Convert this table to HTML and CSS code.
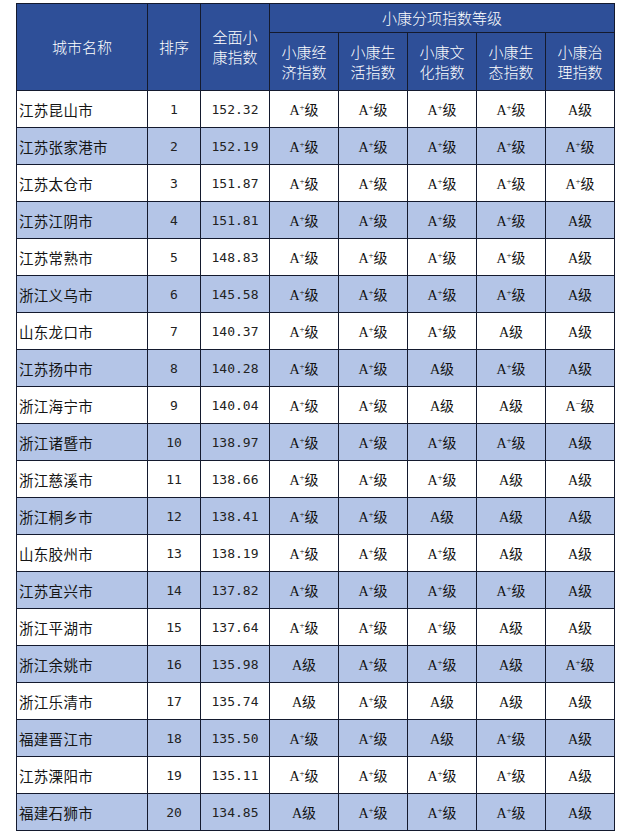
FILE: index.html
```html
<!DOCTYPE html>
<html lang="zh-CN">
<head>
<meta charset="utf-8">
<title>小康指数</title>
<link rel="stylesheet" href="styles.css">
</head>
<body>
<table class="rank">
  <colgroup>
    <col class="c-city"><col class="c-rank"><col class="c-score">
    <col class="c-g"><col class="c-g"><col class="c-g"><col class="c-g"><col class="c-g">
  </colgroup>
  <thead>
    <tr class="h1">
      <th rowspan="2">城市名称</th>
      <th rowspan="2">排序</th>
      <th rowspan="2">全面小<br>康指数</th>
      <th colspan="5">小康分项指数等级</th>
    </tr>
    <tr class="h2">
      <th>小康经<br>济指数</th>
      <th>小康生<br>活指数</th>
      <th>小康文<br>化指数</th>
      <th>小康生<br>态指数</th>
      <th>小康治<br>理指数</th>
    </tr>
  </thead>
  <tbody>
    <tr><td class="city">江苏昆山市</td><td class="num">1</td><td class="num">152.32</td><td class="g">A<sup>+</sup>级</td><td class="g">A<sup>+</sup>级</td><td class="g">A<sup>+</sup>级</td><td class="g">A<sup>+</sup>级</td><td class="g">A级</td></tr>
    <tr><td class="city">江苏张家港市</td><td class="num">2</td><td class="num">152.19</td><td class="g">A<sup>+</sup>级</td><td class="g">A<sup>+</sup>级</td><td class="g">A<sup>+</sup>级</td><td class="g">A<sup>+</sup>级</td><td class="g">A<sup>+</sup>级</td></tr>
    <tr><td class="city">江苏太仓市</td><td class="num">3</td><td class="num">151.87</td><td class="g">A<sup>+</sup>级</td><td class="g">A<sup>+</sup>级</td><td class="g">A<sup>+</sup>级</td><td class="g">A<sup>+</sup>级</td><td class="g">A<sup>+</sup>级</td></tr>
    <tr><td class="city">江苏江阴市</td><td class="num">4</td><td class="num">151.81</td><td class="g">A<sup>+</sup>级</td><td class="g">A<sup>+</sup>级</td><td class="g">A<sup>+</sup>级</td><td class="g">A<sup>+</sup>级</td><td class="g">A级</td></tr>
    <tr><td class="city">江苏常熟市</td><td class="num">5</td><td class="num">148.83</td><td class="g">A<sup>+</sup>级</td><td class="g">A<sup>+</sup>级</td><td class="g">A<sup>+</sup>级</td><td class="g">A<sup>+</sup>级</td><td class="g">A级</td></tr>
    <tr><td class="city">浙江义乌市</td><td class="num">6</td><td class="num">145.58</td><td class="g">A<sup>+</sup>级</td><td class="g">A<sup>+</sup>级</td><td class="g">A<sup>+</sup>级</td><td class="g">A<sup>+</sup>级</td><td class="g">A级</td></tr>
    <tr><td class="city">山东龙口市</td><td class="num">7</td><td class="num">140.37</td><td class="g">A<sup>+</sup>级</td><td class="g">A<sup>+</sup>级</td><td class="g">A<sup>+</sup>级</td><td class="g">A级</td><td class="g">A级</td></tr>
    <tr><td class="city">江苏扬中市</td><td class="num">8</td><td class="num">140.28</td><td class="g">A<sup>+</sup>级</td><td class="g">A<sup>+</sup>级</td><td class="g">A级</td><td class="g">A<sup>+</sup>级</td><td class="g">A级</td></tr>
    <tr><td class="city">浙江海宁市</td><td class="num">9</td><td class="num">140.04</td><td class="g">A<sup>+</sup>级</td><td class="g">A<sup>+</sup>级</td><td class="g">A级</td><td class="g">A级</td><td class="g">A<sup>−</sup>级</td></tr>
    <tr><td class="city">浙江诸暨市</td><td class="num">10</td><td class="num">138.97</td><td class="g">A<sup>+</sup>级</td><td class="g">A<sup>+</sup>级</td><td class="g">A<sup>+</sup>级</td><td class="g">A<sup>+</sup>级</td><td class="g">A级</td></tr>
    <tr><td class="city">浙江慈溪市</td><td class="num">11</td><td class="num">138.66</td><td class="g">A<sup>+</sup>级</td><td class="g">A<sup>+</sup>级</td><td class="g">A<sup>+</sup>级</td><td class="g">A级</td><td class="g">A级</td></tr>
    <tr><td class="city">浙江桐乡市</td><td class="num">12</td><td class="num">138.41</td><td class="g">A<sup>+</sup>级</td><td class="g">A<sup>+</sup>级</td><td class="g">A级</td><td class="g">A级</td><td class="g">A级</td></tr>
    <tr><td class="city">山东胶州市</td><td class="num">13</td><td class="num">138.19</td><td class="g">A<sup>+</sup>级</td><td class="g">A<sup>+</sup>级</td><td class="g">A<sup>+</sup>级</td><td class="g">A级</td><td class="g">A级</td></tr>
    <tr><td class="city">江苏宜兴市</td><td class="num">14</td><td class="num">137.82</td><td class="g">A<sup>+</sup>级</td><td class="g">A<sup>+</sup>级</td><td class="g">A<sup>+</sup>级</td><td class="g">A<sup>+</sup>级</td><td class="g">A级</td></tr>
    <tr><td class="city">浙江平湖市</td><td class="num">15</td><td class="num">137.64</td><td class="g">A<sup>+</sup>级</td><td class="g">A<sup>+</sup>级</td><td class="g">A<sup>+</sup>级</td><td class="g">A级</td><td class="g">A级</td></tr>
    <tr><td class="city">浙江余姚市</td><td class="num">16</td><td class="num">135.98</td><td class="g">A级</td><td class="g">A<sup>+</sup>级</td><td class="g">A<sup>+</sup>级</td><td class="g">A级</td><td class="g">A<sup>+</sup>级</td></tr>
    <tr><td class="city">浙江乐清市</td><td class="num">17</td><td class="num">135.74</td><td class="g">A级</td><td class="g">A<sup>+</sup>级</td><td class="g">A级</td><td class="g">A级</td><td class="g">A级</td></tr>
    <tr><td class="city">福建晋江市</td><td class="num">18</td><td class="num">135.50</td><td class="g">A<sup>+</sup>级</td><td class="g">A<sup>+</sup>级</td><td class="g">A级</td><td class="g">A<sup>+</sup>级</td><td class="g">A级</td></tr>
    <tr><td class="city">江苏溧阳市</td><td class="num">19</td><td class="num">135.11</td><td class="g">A<sup>+</sup>级</td><td class="g">A<sup>+</sup>级</td><td class="g">A<sup>+</sup>级</td><td class="g">A<sup>+</sup>级</td><td class="g">A级</td></tr>
    <tr><td class="city">福建石狮市</td><td class="num">20</td><td class="num">134.85</td><td class="g">A级</td><td class="g">A<sup>+</sup>级</td><td class="g">A<sup>+</sup>级</td><td class="g">A<sup>+</sup>级</td><td class="g">A级</td></tr>
  </tbody>
</table>
</body>
</html>
```

FILE: styles.css
```css
html, body {
  margin: 0;
  padding: 0;
  background: #ffffff;
}

body {
  font-family: "Noto Sans CJK SC", "Noto Sans", sans-serif;
  color: #111111;
}

.rank {
  margin: 3px 0 0 16px;
  border-collapse: collapse;
  table-layout: fixed;
  width: 599px;
}

.c-city { width: 131px; }
.c-rank { width: 53px; }
.c-score { width: 69px; }
.c-g { width: 69px; }

.rank th,
.rank td {
  border: 1px solid #141a2e;
  padding: 0;
}

.rank th {
  background: #2e4f98;
  color: #ffffff;
  font-weight: 300;
  font-size: 15px;
  line-height: 20px;
  text-align: center;
}

.rank .h1 th { height: 28px; }
.rank .h2 th { height: 57px; }

.rank tbody tr { height: 37px; }
.rank tbody tr:nth-child(even) td { background: #b4c5e7; }

.rank td {
  text-align: center;
  vertical-align: middle;
}

.rank td.city {
  text-align: left;
  padding-left: 2px;
  font-size: 14.5px;
  letter-spacing: 0.3px;
  color: #151515;
}

.rank td.num {
  font-family: "DejaVu Sans Mono", "Liberation Mono", monospace;
  font-size: 13px;
  color: #222222;
}

.rank td.g {
  font-family: "Liberation Serif", "Noto Sans CJK SC", serif;
  font-size: 14px;
  color: #111111;
}

.rank td.g sup {
  font-size: 9px;
  line-height: 0;
  vertical-align: 5px;
}
```
